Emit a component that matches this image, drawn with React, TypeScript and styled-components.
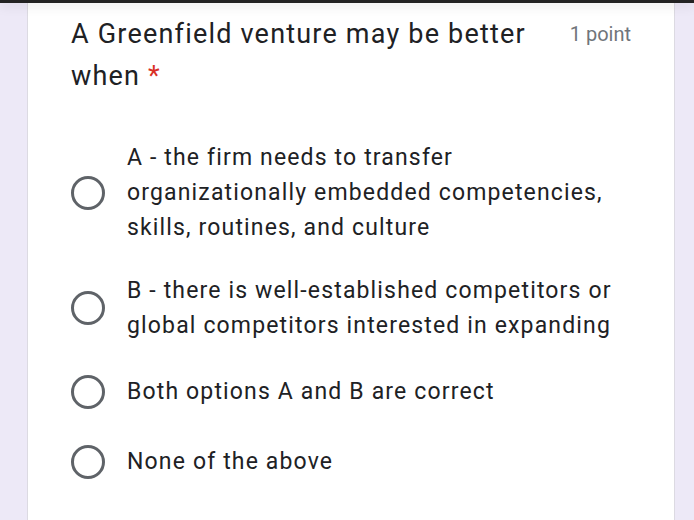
import React from 'react';
import styled, {createGlobalStyle} from 'styled-components';

const GlobalStyle = createGlobalStyle`
  html, body {
    margin: 0;
    padding: 0;
    background: #ede9f7;
    font-family: Roboto, "Noto Sans", Arial, sans-serif;
    overflow: hidden;
  }
`;

// gap above each option, as in the form
const OPTIONS = [
  {label: 'A - the firm needs to transfer organizationally embedded competencies, skills, routines, and culture', space: 43},
  {label: 'B - there is well-established competitors or global competitors interested in expanding', space: 28},
  {label: 'Both options A and B are correct', space: 31},
  {label: 'None of the above', space: 35},
];

const Page = styled.div`
  position: relative;
  width: 694px;
  height: 520px;
  background: #ede9f7;
  overflow: hidden;
`;

const TopBar = styled.div`
  position: absolute;
  top: 0;
  left: 0;
  right: 0;
  height: 3px;
  background: #232323;
  box-shadow: 0 2px 12px rgba(0, 0, 0, 0.18);
  z-index: 2;
`;

const Card = styled.section`
  margin-left: 27px;
  width: 648px;
  height: 100%;
  background: #fff;
  border-left: 1px solid #dcdae2;
  border-right: 1px solid #dcdae2;
  box-sizing: border-box;
  padding: 13px 43px 0 43px;
`;

const Header = styled.div`
  display: flex;
  align-items: flex-start;
  justify-content: space-between;
`;

const Title = styled.h2`
  margin: 0;
  width: 480px;
  font-weight: 400;
  font-size: 27px;
  line-height: 42px;
  letter-spacing: 1.2px;
  color: #202124;
`;

const Required = styled.span`
  color: #d93025;
`;

const Points = styled.span`
  font-size: 20px;
  line-height: 42px;
  color: #70757a;
  white-space: nowrap;
`;

const List = styled.div`
  display: flex;
  flex-direction: column;
`;

const Option = styled.label<{$space: number}>`
  display: flex;
  align-items: center;
  gap: 22px;
  margin-top: ${p => p.$space}px;
`;

const Radio = styled.span`
  flex: none;
  width: 34px;
  height: 34px;
  box-sizing: border-box;
  border: 3px solid #5f6368;
  border-radius: 50%;
`;

const OptionText = styled.span`
  width: 500px;
  font-size: 23px;
  line-height: 35px;
  letter-spacing: 1.15px;
  color: #202124;
`;

export default function App() {
  return (
    <Page>
      <GlobalStyle />
      <TopBar />
      <Card>
        <Header>
          <Title>
            A Greenfield venture may be better when <Required>*</Required>
          </Title>
          <Points>1 point</Points>
        </Header>
        <List>
          {OPTIONS.map(o => (
            <Option key={o.label} $space={o.space}>
              <Radio />
              <OptionText>{o.label}</OptionText>
            </Option>
          ))}
        </List>
      </Card>
    </Page>
  );
}
